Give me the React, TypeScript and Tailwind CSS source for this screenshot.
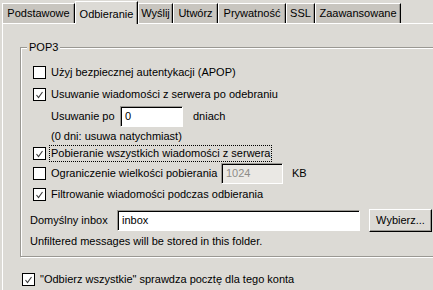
import React from "react";

type CheckProps = { checked?: boolean };

const Check: React.FC<CheckProps> = ({ checked }) => (
  <span className="w-[13px] h-[13px] shrink-0 bg-white border border-black flex items-center justify-center">
    {checked && (
      <svg width="11" height="11" viewBox="0 0 11 11">
        <path d="M2.5 6 L4.5 8.5 L8.5 3" fill="none" stroke="#3a3a3a" strokeWidth="1.1" />
      </svg>
    )}
  </span>
);

const tabs = [
  { label: "Podstawowe", width: "w-[73px]" },
  { label: "Odbieranie", width: "w-[63px]", active: true },
  { label: "Wyślij", width: "w-[35px]" },
  { label: "Utwórz", width: "w-[45px]" },
  { label: "Prywatność", width: "w-[68px]" },
  { label: "SSL", width: "w-[29px]" },
  { label: "Zaawansowane", width: "w-[86px]" },
];

const entry =
  "h-[21px] shrink-0 border border-t-[#9a9893] border-l-[#9a9893] border-b-white border-r-white shadow-[inset_1px_1px_0_#000] flex items-center pl-[4px]";

export default function App() {
  return (
    <div className="w-[433px] h-[290px] overflow-hidden bg-[#dcdad5] pl-[2px] text-[11px] leading-[13px] text-black whitespace-nowrap font-['Liberation_Sans',Arial,sans-serif]">
      {/* tabs */}
      <div className="flex items-end h-[23px]">
        {tabs.map((tab) =>
          tab.active ? (
            <div
              key={tab.label}
              className={`${tab.width} h-[23px] -mb-px relative z-10 bg-[#dcdad5] border-t border-l border-r border-t-white border-l-white border-r-black shadow-[inset_-1px_0_0_#9a9893] flex items-start justify-center pt-[6px]`}
            >
              {tab.label}
            </div>
          ) : (
            <div
              key={tab.label}
              className={`${tab.width} h-[20px] bg-[#c8c5bf] border-t border-l border-r border-t-white border-l-white border-r-black shadow-[inset_-1px_0_0_#9a9893] flex items-center justify-center`}
            >
              {tab.label}
            </div>
          )
        )}
      </div>

      {/* page */}
      <div className="border-t border-l border-white h-[267px]">
        <div className="relative ml-[17px] mt-[23px] w-[440px] border border-[#9a9893] shadow-[inset_1px_1px_0_#fff,1px_1px_0_#fff] pt-[13px] pb-[6px]">
          <span className="absolute -top-[7px] left-[6px] px-[2px] bg-[#dcdad5]">POP3</span>

          <div className="flex items-center h-[22px] pl-[12px] gap-[5px]">
            <Check />
            <span>Użyj bezpiecznej autentykacji (APOP)</span>
          </div>
          <div className="flex items-center h-[22px] pl-[12px] gap-[5px]">
            <Check checked />
            <span>Usuwanie wiadomości z serwera po odebraniu</span>
          </div>
          <div className="flex items-center h-[22px] pl-[30px]">
            <span className="w-[69px] shrink-0">Usuwanie po</span>
            <div className={`${entry} w-[63px] bg-white`}>0</div>
            <span className="ml-[10px]">dniach</span>
          </div>
          <div className="flex items-center h-[18px] pl-[30px]">
            <span>(0 dni: usuwa natychmiast)</span>
          </div>
          <div className="flex items-center h-[17px] pl-[12px] gap-[3px]">
            <Check checked />
            <span className="h-[17px] flex items-center px-[1px] border border-dotted border-black">
              Pobieranie wszystkich wiadomości z serwera
            </span>
          </div>
          <div className="flex items-center h-[22px] pl-[12px] gap-[5px]">
            <Check />
            <span className="w-[165px] shrink-0">Ograniczenie wielkości pobierania</span>
            <div className={`${entry} w-[62px] h-[20px] bg-[#eae8e4] text-[#8e8c88]`}>1024</div>
            <span className="ml-[4px]">KB</span>
          </div>
          <div className="flex items-center h-[20px] pl-[12px] gap-[5px]">
            <Check checked />
            <span>Filtrowanie wiadomości podczas odbierania</span>
          </div>
          <div className="flex items-center h-[23px] mt-[5px] pl-[9px]">
            <span className="w-[87px] shrink-0">Domyślny inbox</span>
            <div className={`${entry} w-[243px] bg-white`}>inbox</div>
            <button className="ml-[9px] w-[63px] h-[23px] shrink-0 bg-[#dcdad5] border border-t-white border-l-white border-b-black border-r-black shadow-[inset_-1px_-1px_0_#9a9893] flex items-center justify-center">
              Wybierz...
            </button>
          </div>
          <div className="flex items-center h-[18px] pl-[9px]">
            <span>Unfiltered messages will be stored in this folder.</span>
          </div>
        </div>

        <div className="flex items-center h-[22px] mt-[11px] pl-[19px] gap-[5px]">
          <Check checked />
          <span>"Odbierz wszystkie" sprawdza pocztę dla tego konta</span>
        </div>
      </div>
    </div>
  );
}
